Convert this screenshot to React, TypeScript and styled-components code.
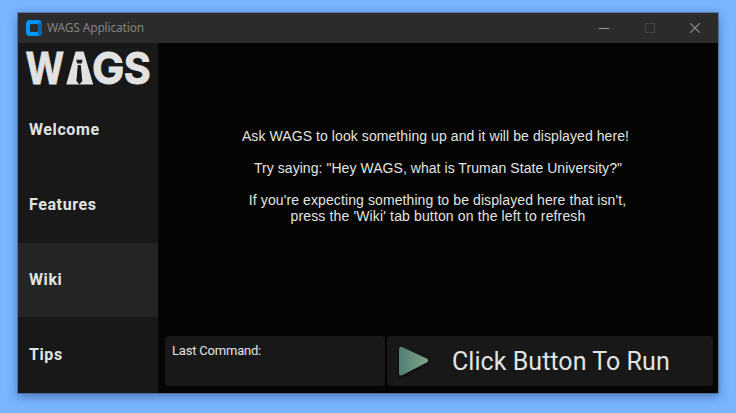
import React from "react";
import styled, { createGlobalStyle } from "styled-components";

const GlobalStyle = createGlobalStyle`
  * { box-sizing: border-box; }
  body { margin: 0; background: #75b1ff; overflow: hidden; }
`;

const Desktop = styled.div`
  width: 736px;
  height: 413px;
  padding: 13px 18px 20px;
  background: #78b4ff;
`;

const Window = styled.div`
  display: flex;
  flex-direction: column;
  width: 700px;
  height: 380px;
  background: #050503;
  box-shadow: 0 0 0 1px rgba(70, 90, 115, 0.55), 0 3px 10px rgba(0, 20, 60, 0.42);
`;

const TitleBar = styled.header`
  display: flex;
  align-items: center;
  height: 30px;
  flex: none;
  padding-left: 8px;
  background: #2b2b2b;
`;

const Title = styled.span`
  flex: 1;
  margin-left: 5px;
  font: 12px/16px "Noto Sans", "Open Sans", sans-serif;
  letter-spacing: -0.17px;
  color: #828282;
`;

const WindowButton = styled.span`
  display: flex;
  width: 45.5px;
  justify-content: center;
`;

const Body = styled.div`
  display: flex;
  flex: 1;
`;

const Sidebar = styled.nav`
  display: flex;
  flex-direction: column;
  width: 140px;
  background: #181818;
`;

const Logo = styled.svg`
  display: block;
  flex: none;
  width: 140px;
  height: 50px;
`;

const NavItem = styled.a<{ $active?: boolean }>`
  display: flex;
  align-items: center;
  height: 74px;
  margin-bottom: 1px;
  padding: 0 0 0 11px;
  font: 700 16px/20px Roboto, sans-serif;
  letter-spacing: 0.6px;
  color: #e0e4e1;
  background: ${(p) => (p.$active ? "#242625" : "transparent")};
`;

const Main = styled.main`
  display: flex;
  flex-direction: column;
  width: 560px;
  background: #050503;
`;

const Message = styled.div`
  flex: 1;
  padding-top: 85px;
  text-align: center;
  font: 14px/16px "Liberation Sans", Arial, sans-serif;
  color: #e0e4e1;
`;

const Line = styled.div<{ $spacing?: number; $gap?: boolean; $trail?: number }>`
  letter-spacing: ${(p) => p.$spacing ?? 0}px;
  padding-right: ${(p) => p.$trail ?? 0}px;
  margin-bottom: ${(p) => (p.$gap ? 16 : 0)}px;
  white-space: nowrap;
`;

const Footer = styled.footer`
  display: flex;
  gap: 2px;
  padding: 0 5px 7px 7px;
`;

const CommandPanel = styled.section`
  width: 220px;
  height: 50px;
  padding: 7px;
  border-radius: 4px;
  background: #181818;
  font: 13px/16px Roboto, sans-serif;
  letter-spacing: -0.2px;
  color: #e0e4e1;
`;

const RunButton = styled.div`
  display: flex;
  align-items: center;
  flex: 1;
  height: 50px;
  padding-left: 9px;
  border-radius: 4px;
  background: #181818;
  font: 25px/30px Roboto, sans-serif;
  color: #e0e4e1;
`;

const RunLabel = styled.span`
  margin: 2px 0 0 20px;
  letter-spacing: 0.05px;
  white-space: nowrap;
`;

const AppIcon = () => (
  <svg width="16" height="16" viewBox="0 0 16 16">
    <rect width="16" height="16" rx="3.5" fill="#0096fa" />
    <path d="M12 4 14.8 1Q16 2 16 4V12Q16 16 12.5 16L12 12Z" fill="#0563b0" />
    <rect x="4" y="4" width="8" height="8" rx="1.2" fill="#2b2b2b" />
  </svg>
);

const letters = [
  { char: "W", x: 7.6, width: 38.6 },
  { char: "G", x: 74.1, width: 32.3 },
  { char: "S", x: 105.7, width: 27 },
];

const WagsLogo = () => (
  <Logo viewBox="0 0 140 50">
    <g
      fill="#e2e2e2"
      stroke="#e2e2e2"
      strokeWidth="0.9"
      fontFamily="Inter, sans-serif"
      fontWeight="700"
      fontSize="44.5"
    >
      {letters.map((l) => (
        <text key={l.char} x={l.x} y="41" textLength={l.width} lengthAdjust="spacingAndGlyphs">
          {l.char}
        </text>
      ))}
    </g>
    {/* The "A" is a jacket with a collar and a tie cut out of it */}
    <path d="M57.6 8.5H65.6L75.2 41.6H48.2Z" fill="#e2e2e2" />
    <path d="M58.2 16.8H64.6L63.6 20.5H59.2ZM59.8 22H62.8L64.3 38 61.4 41.6 58.4 38Z" fill="#181818" />
  </Logo>
);

const PlayIcon = () => (
  <svg width="36" height="40" viewBox="0 0 36 40">
    <defs>
      <linearGradient id="play">
        <stop offset="0" stopColor="#507d74" />
        <stop offset="1" stopColor="#82a589" />
      </linearGradient>
      <filter id="shadow" x="-20%" y="-20%" width="150%" height="150%">
        <feDropShadow dx="-0.5" dy="1.5" stdDeviation="1" floodColor="#000" />
      </filter>
    </defs>
    <path
      d="M3 8.5Q3 4.8 6.4 6.2L30.5 17.4Q33.7 19.5 30.5 21.5L6.4 34Q3 35.4 3 31.5Z"
      fill="url(#play)"
      filter="url(#shadow)"
    />
  </svg>
);

export default function App() {
  return (
    <Desktop>
      <GlobalStyle />
      <Window>
        <TitleBar>
          <AppIcon />
          <Title>WAGS Application</Title>
          <WindowButton>
            <svg width="10" height="10"><path d="M0 5.5H10" stroke="#999" /></svg>
          </WindowButton>
          <WindowButton>
            <svg width="10" height="10"><rect x=".5" y=".5" width="9" height="9" fill="none" stroke="#444" /></svg>
          </WindowButton>
          <WindowButton>
            <svg width="10" height="10"><path d="M.3.3 9.7 9.7M9.7.3.3 9.7" stroke="#929292" strokeWidth="1.2" /></svg>
          </WindowButton>
        </TitleBar>
        <Body>
          <Sidebar>
            <WagsLogo />
            <NavItem>Welcome</NavItem>
            <NavItem>Features</NavItem>
            <NavItem $active>Wiki</NavItem>
            <NavItem>Tips</NavItem>
          </Sidebar>
          <Main>
            <Message>
              <Line $gap $trail={5} $spacing={0.08}>Ask WAGS to look something up and it will be displayed here!</Line>
              <Line $gap $spacing={0.05}>Try saying: "Hey WAGS, what is Truman State University?"</Line>
              <Line $spacing={0.1} $trail={1}>If you're expecting something to be displayed here that isn't,</Line>
              <Line $spacing={0.14}>press the 'Wiki' tab button on the left to refresh</Line>
            </Message>
            <Footer>
              <CommandPanel>Last Command:</CommandPanel>
              <RunButton>
                <PlayIcon />
                <RunLabel>Click Button To Run</RunLabel>
              </RunButton>
            </Footer>
          </Main>
        </Body>
      </Window>
    </Desktop>
  );
}
